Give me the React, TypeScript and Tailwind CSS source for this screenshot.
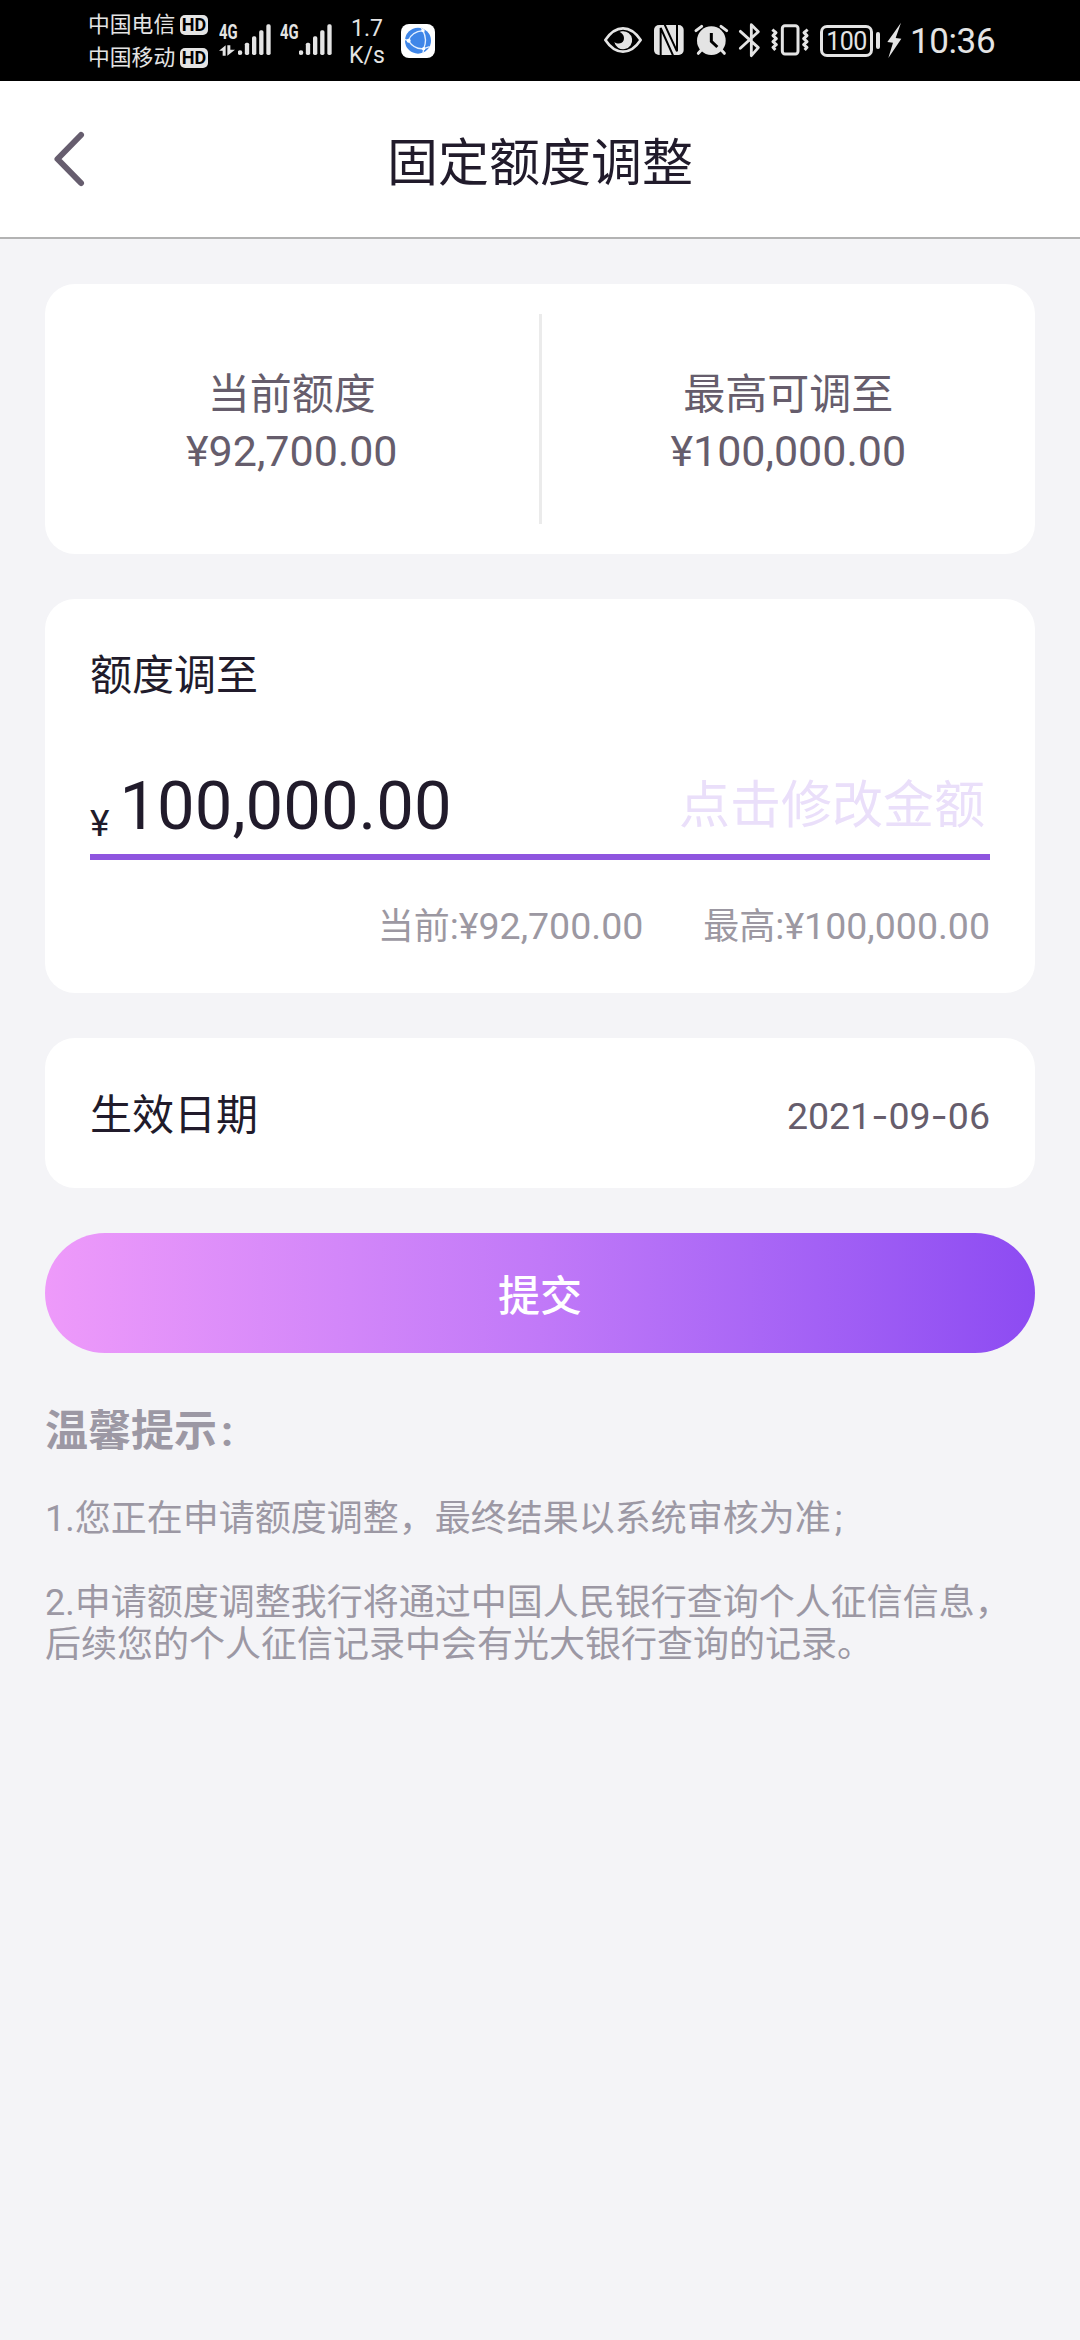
import type { ReactNode } from "react";

const INK = "#e4e4e4";

/* Status icons share one vertical band, 38px tall, drawn on a grid of 3 units per pixel. */
function StatusIcon({ x, w, className, children }: { x: number; w: number; className?: string; children: ReactNode }) {
  return (
    <svg
      viewBox={`${x} 66 ${w * 3} 114`}
      width={w}
      height={38}
      className={`shrink-0 overflow-visible ${className ?? ""}`}
      fill={INK}
    >
      {children}
    </svg>
  );
}

function Carrier({ name }: { name: string }) {
  return (
    <div className="flex h-[33px] items-center">
      <span className="w-[92px] text-[21.8px] leading-[33px]">{name}</span>
      <span className="flex h-[20px] w-[28px] items-center justify-center rounded-[5px] bg-[#e4e4e4] text-[18px] leading-none font-bold text-black">
        HD
      </span>
    </div>
  );
}

function Signal({ arrows, className }: { arrows?: boolean; className?: string }) {
  return (
    <div className={`flex ${className ?? ""}`}>
      <div className="w-[18px]">
        <div className="origin-left scale-x-[0.76] pt-[22px] text-[19.5px] leading-[21px] font-bold">4G</div>
        {arrows && (
          <svg viewBox="0 0 48 32" width={16} height={11} className="mt-[2px]" fill={INK}>
            <path d="M20 0v32h-9V17H0zM25 0h9v14h14L25 32z" />
          </svg>
        )}
      </div>
      <svg viewBox="0 0 99 93" width={33} height={31} className="mt-[24px] ml-px" fill={INK}>
        <circle cx="6" cy="86" r="7" />
        <rect x="20.500" y="56" width="13" height="37" rx="5" />
        <rect x="42" y="37" width="13" height="56" rx="5" />
        <rect x="63.500" y="19" width="13" height="74" rx="5" />
        <rect x="85" y="1" width="13" height="92" rx="5" />
      </svg>
    </div>
  );
}

function StatusBar() {
  return (
    <div className="flex h-[81px] items-start bg-black pl-[88px] text-[#e4e4e4]">
      <div className="pt-[8px]">
        <Carrier name="中国电信" />
        <Carrier name="中国移动" />
      </div>
      <Signal arrows className="ml-[11px]" />
      <Signal className="ml-[9px]" />
      <div className="ml-[16px] w-[38px] pt-[15px] text-center text-[23px] leading-[27px]">
        1.7
        <br />
        K/s
      </div>
      <svg viewBox="0 0 102 102" width={34} height={34} className="mt-[24px] ml-[15px] shrink-0">
        <rect width="102" height="102" rx="24" fill="#fff" />
        <circle cx="51" cy="50" r="39" fill="#3f86e8" />
        <g fill="none" stroke="#e4f0ff" strokeWidth="4">
          <path d="M66 20C45 22 28 33 22 50M22 50C34 68 50 76 68 74M66 20C75 38 76 56 68 74M22 50L11 46M66 20L60 10M68 74L66 88M68 74L86 68" />
        </g>
        <g fill="#fff">
          <circle cx="66" cy="20" r="5" />
          <circle cx="23" cy="50" r="6" />
          <circle cx="68" cy="74" r="5" />
        </g>
      </svg>

      <div className="ml-[169px] flex pt-[22px]">
        <StatusIcon x={42} w={38}>
          <path d="M46 120C62 96 79 85 99 85s37 11 53 35c-16 24-33 35-53 35s-37-11-53-35z" fill="none" stroke={INK} strokeWidth="8" strokeLinejoin="round" />
          <path d="M96 94a27 27 0 1 1-23 32c9 8 24 6 28-5 3-9 0-19-12-25a27 27 0 0 1 7-2z" />
        </StatusIcon>
        <StatusIcon x={191} w={30} className="ml-[12px]">
          <rect x="191" y="75" width="89" height="90" rx="15" />
          <path d="M211 166V84l37 82M260 74v80L223 74" fill="none" stroke="#000" strokeWidth="6" />
        </StatusIcon>
        <StatusIcon x={314} w={33} className="ml-[11px]">
          <circle cx="363" cy="122" r="43" />
          <path d="M317 92L334 79M409 92L392 79M333 150l-9 10M393 150l9 10" fill="none" stroke={INK} strokeWidth="9" strokeLinecap="round" />
          <path d="M363 99v25l18 17" fill="none" stroke="#000" strokeWidth="9" />
        </StatusIcon>
        <StatusIcon x={446} w={21} className="ml-[11px]">
          <path d="M450 94l54 49-21 24V74l21 21-54 50" fill="none" stroke={INK} strokeWidth="8.500" strokeLinejoin="round" strokeLinecap="round" />
        </StatusIcon>
        <StatusIcon x={543} w={38} className="ml-[11px]">
          <rect x="577" y="77" width="47" height="85" rx="8" fill="none" stroke={INK} strokeWidth="9" />
          <path d="M547 89l11 9-9 9 10 9-10 9 10 9-10 8 7 8M653 89l-11 9 9 9-10 9 10 9-10 9 10 8-7 8" fill="none" stroke={INK} strokeWidth="9" strokeLinejoin="round" />
        </StatusIcon>
        <div className="mt-[3px] ml-[11px] flex h-[32px] w-[53px] items-center justify-center rounded-[7px] border-[3px] border-[#e4e4e4] text-[25px] leading-none tracking-[-0.6px]">
          100
        </div>
        <div className="mt-[10px] ml-[3px] h-[17px] w-[4px] rounded-[2px] bg-[#e4e4e4]" />
        <StatusIcon x={894} w={15} className="ml-[7px]">
          <path d="M936 68L895 126l17 2-14 46 39-58-17-2z" />
        </StatusIcon>
        <span className="ml-[8px] pt-px text-[35px] leading-[38px] tracking-[-0.4px]">10:36</span>
      </div>
    </div>
  );
}

function Limit({ label, value }: { label: string; value: string }) {
  return (
    <div className="flex flex-1 flex-col items-center justify-center pt-2 leading-[56px] text-[#665d6c]">
      <span className="text-[42px]">{label}</span>
      <span className="text-[43px]">{value}</span>
    </div>
  );
}

function Hint({ label, value }: { label: string; value: string }) {
  return (
    <span className="text-[37.5px] leading-[45px]">
      <span className="text-[36px]">{label}</span>:{value}
    </span>
  );
}

export default function App() {
  return (
    <div className="flex h-[2340px] w-[1080px] flex-col overflow-hidden bg-[#f4f4f7] font-[Roboto,'Noto_Sans_CJK_SC',sans-serif] whitespace-nowrap text-[#211b2b]">
      <StatusBar />

      <header className="grid h-[158px] grid-cols-[1fr_auto_1fr] items-center border-b-2 border-[#b3b3b3] bg-white">
        <svg viewBox="0 0 36 60" width={36} height={60} className="ml-[51px]" fill="none" stroke="#665d6e" strokeWidth="6" strokeLinecap="round" strokeLinejoin="round">
          <path d="M30 6L6.500 30L30 54" />
        </svg>
        <h1 className="pt-[9px] text-[51px] leading-[51px]">固定额度调整</h1>
      </header>

      <main className="flex flex-col px-[45px] pt-[45px]">
        <section className="flex h-[270px] items-center rounded-[30px] bg-white">
          <Limit label="当前额度" value="¥92,700.00" />
          <div className="h-[210px] w-[3px] bg-[#ebebeb]" />
          <Limit label="最高可调至" value="¥100,000.00" />
        </section>

        <section className="mt-[45px] h-[394px] rounded-[30px] bg-white px-[45px] pt-[56px]">
          <h2 className="text-[42px] leading-[42px]">额度调至</h2>
          <div className="flex h-[163px] items-end border-b-[6px] border-[#8f55df]">
            <span className="mb-[12px] text-[37px] leading-[37px]">¥</span>
            <span className="mb-[14px] ml-[10px] text-[67px] leading-[68px]">100,000.00</span>
            <span className="mr-[5px] mb-[23px] ml-auto text-[51px] leading-[51px] text-[#eadffa]">点击修改金额</span>
          </div>
          <div className="flex justify-end gap-[60px] pt-[44px] text-[#9c98a2]">
            <Hint label="当前" value="¥92,700.00" />
            <Hint label="最高" value="¥100,000.00" />
          </div>
        </section>

        <section className="mt-[45px] flex h-[150px] items-center justify-between rounded-[30px] bg-white px-[45px] pt-[6px]">
          <h2 className="text-[42px] leading-[42px]">生效日期</h2>
          <span className="text-[37.5px] leading-[42px] text-[#665d6c]">
            2021<span className="font-[Inter]">-</span>09<span className="font-[Inter]">-</span>06
          </span>
        </section>

        <button className="mt-[45px] h-[120px] rounded-full bg-linear-to-r from-[#ee9afa] via-[#c179f8] to-[#8d4bf2] pt-[7px] text-[42px] leading-[42px] font-medium text-white">
          提交
        </button>

        <div className="pt-[57px] leading-[42px] text-[#9c98a4]">
          <h3 className="text-[43px] font-bold">
            温馨提示<span className="pl-[4px]">:</span>
          </h3>
          <p className="mt-[46px] text-[36px]">
            1.您正在申请额度调整，最终结果以系统审核为准<span className="pl-[4px]">;</span>
          </p>
          <p className="mt-[42px] text-[36px]">
            2.申请额度调整我行将通过中国人民银行查询个人征信信息，
            <br />
            后续您的个人征信记录中会有光大银行查询的记录。
          </p>
        </div>
      </main>
    </div>
  );
}
